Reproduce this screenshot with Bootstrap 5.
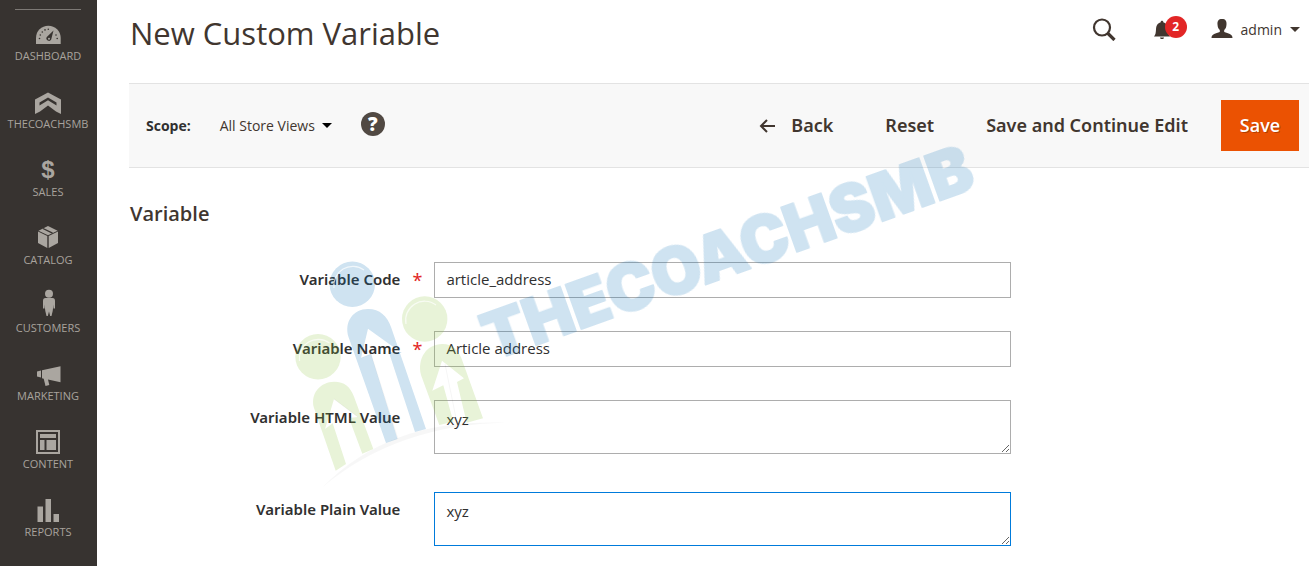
<!DOCTYPE html>
<html lang="en">
<head>
<meta charset="utf-8">
<meta name="viewport" content="width=device-width, initial-scale=1">
<title>New Custom Variable</title>
<link rel="stylesheet" href="https://cdn.jsdelivr.net/npm/bootstrap@5.3.0/dist/css/bootstrap.min.css">
<style>
  body { font-family: "Open Sans", "Noto Sans", sans-serif; font-size: 14px; color: #303030; background: #fff; }
  .side-menu { width: 97px; background: #373330; padding: 9px 1px 6px 0; }
  .side-menu hr { width: 66px; margin: 0 auto 6px; border-top: 1px solid #7d7975; opacity: 1; }
  .side-menu a { color: #a8a39d; font-size: 11px; line-height: 16px; margin-bottom: 20px; text-decoration: none; text-transform: uppercase; }
  .side-menu a:hover { color: #fff; }
  .side-menu svg { width: 28px; height: 30px; margin-bottom: 2px; fill: #aaa6a0; overflow: visible; }
  .main-area { min-width: 0; padding: 0 2px 0 32px; }
  .page-top { height: 83px; padding: 0 9px 0 1px; }
  .page-top h1 { font-size: 31px; line-height: 40px; font-weight: 400; color: #41362f; margin: 13px 0 0; }
  .top-tools { margin-top: 12px; height: 34px; }
  .plain-btn { background: none; border: 0; padding: 0; color: #41362f; }
  .search-btn { margin-right: 37px; }
  .caret { width: 0; height: 0; border: 5px solid transparent; border-top-color: currentColor; border-bottom: 0; }
  .bell-btn { width: 34px; height: 34px; }
  .bell-btn svg { margin-top: 2px; }
  .bell-count { top: 4px; left: 12px; width: 22px; height: 22px; background: #e22626; color: #fff; font-size: 12px; font-weight: 700; line-height: 22px; }
  .action-bar { background: #f8f8f8; border-top: 1px solid #e3e3e3; border-bottom: 1px solid #e3e3e3; padding: 16px 10px 16px 17px; min-height: 85px; }
  .scope-box { gap: 29px; }
  .scope-btn { font-size: 14px; gap: 7px; }
  .help-btn { width: 24px; height: 24px; margin-bottom: 4px; border: 0; padding: 0; background: #514943; color: #fff; font-size: 19px; font-weight: 800; line-height: 24px; }
  .actions .plain-btn { font-family: "Noto Sans", "Open Sans", sans-serif; font-size: 18px; font-weight: 600; margin-right: 52px; }
  .actions .continue-btn { margin-right: 33px; }
  .back-btn { gap: 16px; }
  .save-btn { background: #eb5202; border: 0; border-radius: 0; color: #fff; font-size: 18px; font-weight: 600; width: 78px; height: 51px; padding: 0; text-shadow: 1px 1px 0 rgba(0,0,0,.25); }
  .save-btn:hover { background: #ba4000; color: #fff; }
  h2 { font-size: 20px; line-height: 28px; font-weight: 600; color: #41362f; margin: 32px 0 34px; padding-left: 1px; }
  .field { gap: 34px; margin-bottom: 33px; }
  .field-long { margin-bottom: 38px; }
  .field label { width: 23%; font-family: "Noto Sans", "Open Sans", sans-serif; font-size: 15px; line-height: 35px; font-weight: 600; text-align: right; position: relative; }
  .required::after { content: "*"; color: #e22626; position: absolute; left: calc(100% + 12px); font-size: 18px; font-weight: 400; top: 1px; }
  .field .form-control { width: 48.9%; height: 36px; border: 1px solid #adadad; border-radius: 0; padding: 0 11px 2px; font-size: 15px; line-height: 20px; color: #303030; background: #fff; }
  .field textarea.form-control { height: 54px; padding-top: 8px; }
  .field .form-control.current { border-color: #007bdb; }
  .watermark { left: 193px; top: 140px; width: 700px; height: 350px; pointer-events: none; }
  .watermark text { font: 900 64px "Inter", sans-serif; stroke-width: 2px; stroke-linejoin: round; }
</style>
</head>
<body>
<div class="d-flex align-items-start">
  <nav class="side-menu flex-shrink-0" aria-label="Main">
    <hr>
    <a href="#" class="d-flex flex-column align-items-center">
      <svg viewBox="0 0 28 30" aria-hidden="true"><path d="M2 28v-6C2 15 7.500 9.800 14.300 9.800S26.700 15 26.700 22v6z"/><g fill="#373330"><circle cx="5.500" cy="22.500" r=".8"/><circle cx="6.300" cy="19" r=".8"/><circle cx="8.300" cy="16" r=".8"/><circle cx="11" cy="13.900" r=".8"/><circle cx="14.300" cy="13.200" r=".8"/><circle cx="22" cy="19" r=".8"/><circle cx="23.200" cy="22.500" r=".8"/><path d="M19.500 14.500l-2.300 9a2.500 2.500 0 1 1-4.400-2.600z"/></g><circle cx="15" cy="22.700" r="1" /></svg>
      Dashboard</a>
    <a href="#" class="d-flex flex-column align-items-center">
      <svg viewBox="0 0 28 30" aria-hidden="true"><path d="M1 15.500L14 8.500l13 7V30l-5-2.500-8-6-8 6L1 30z"/><path d="M5.500 18.500L14 13.500l8.500 5v3L14 16.300l-8.500 5.200z" fill="#373330"/></svg>
      TheCoachSMB</a>
    <a href="#" class="d-flex flex-column align-items-center">
      <svg viewBox="0 0 28 30" aria-hidden="true"><text x="14" y="26" text-anchor="middle" font-family="Liberation Sans, sans-serif" font-size="24" font-weight="700">$</text></svg>
      Sales</a>
    <a href="#" class="d-flex flex-column align-items-center">
      <svg viewBox="0 0 28 30" aria-hidden="true"><path d="M4 11.500l9.300 4.500v12L4 23zM24 11.500L14.700 16v12L24 23zM14 6l9.600 4.700L14 15.200l-9.500-4.500z"/><path d="M9 8.500l9.500 4.700" stroke="#373330" stroke-width="1.300"/></svg>
      Catalog</a>
    <a href="#" class="d-flex flex-column align-items-center">
      <svg viewBox="0 0 28 30" aria-hidden="true"><circle cx="15" cy="5.700" r="4"/><path d="M11.500 10h7c1.800 0 2.500 1 2.500 3v7.500h-1.500v-4L18.700 23l-1.200 5h-1.300L15 23.500 13.800 28h-1.300l-1.200-5-.8-6.500v4H9V13c0-2 .7-3 2.500-3z"/></svg>
      Customers</a>
    <a href="#" class="d-flex flex-column align-items-center">
      <svg viewBox="0 0 28 30" aria-hidden="true"><path d="M8 14.300l18.500-4v16L14 23.600l1.300 5.300-3.800 1L9.700 22.700 8 22.300zM3 15.400l4-.8v7l-4-1z"/></svg>
      Marketing</a>
    <a href="#" class="d-flex flex-column align-items-center">
      <svg viewBox="0 0 28 30" aria-hidden="true"><path fill-rule="evenodd" d="M2 6h24v24H2zM4 8v20h20V8z"/><path d="M6 10h16v4H6zM6 16h4.500v10H6zM12.500 16H22v10h-9.500z"/></svg>
      Content</a>
    <a href="#" class="d-flex flex-column align-items-center">
      <svg viewBox="0 0 28 30" aria-hidden="true"><path d="M3.500 14.500H9V30H3.500zM11.500 7H17v23h-5.500zM19.500 22H25v8h-5.500z"/></svg>
      Reports</a>
  </nav>

  <main class="main-area flex-grow-1 position-relative">
    <header class="page-top d-flex justify-content-between align-items-start">
      <h1>New Custom Variable</h1>
      <div class="top-tools d-flex align-items-center">
        <button class="plain-btn search-btn d-flex" aria-label="Search"><svg width="24" height="24" viewBox="0 0 24 24" fill="none" stroke="#41362f"><circle cx="10" cy="10.500" r="8" stroke-width="2.200"/><path d="M15.500 16l7 7" stroke-width="3.200"/></svg></button>
        <button class="plain-btn bell-btn position-relative" aria-label="Notifications"><svg class="d-block" width="18" height="20" viewBox="0 0 18 20" fill="#41362f"><path d="M1 16.500c1.700-2 1.800-4 2-7C3.200 5 5 3 7.500 2.500 7.700 0 10.300 0 10.500 2.500 13 3 14.800 5 15 9.500c.2 3 .3 5 2 7zM7 17.500h4c0 2-4 2-4 0z"/></svg><span class="bell-count position-absolute rounded-circle text-center">2</span></button>
        <button class="plain-btn d-flex align-items-center ms-4"><svg class="me-2" width="22" height="20" viewBox="0 0 22 20" fill="#41362f"><path d="M11 0c3.500 0 4.800 2 4.500 5.500-.2 2.800-1 4.500-2.300 5.500v2c4 1.500 8.300 1.800 8.300 6H.5c0-4.200 4.300-4.500 8.300-6v-2C7.500 10 6.700 8.300 6.500 5.500 6.200 2 7.500 0 11 0z"/></svg>admin<span class="caret ms-2"></span></button>
      </div>
    </header>

    <section class="action-bar d-flex justify-content-between align-items-center">
      <div class="scope-box d-flex align-items-center">
        <strong>Scope:</strong>
        <button class="plain-btn scope-btn d-flex align-items-center">All Store Views<span class="caret text-black"></span></button>
        <button class="help-btn rounded-circle text-center" type="button" title="Scope help">?</button>
      </div>
      <div class="actions d-flex align-items-center">
        <button class="plain-btn back-btn d-flex align-items-center"><svg width="16" height="14" viewBox="0 0 16 14" fill="none" stroke="#41362f" stroke-width="2"><path d="M8 1L2 7l6 6M2 7h14"/></svg>Back</button>
        <button class="plain-btn">Reset</button>
        <button class="plain-btn continue-btn">Save and Continue Edit</button>
        <button class="btn save-btn">Save</button>
      </div>
    </section>

    <form>
      <h2>Variable</h2>
      <div class="field d-flex"><label class="required" for="code">Variable Code</label><input class="form-control" id="code" type="text" value="article_address"></div>
      <div class="field d-flex"><label class="required" for="name">Variable Name</label><input class="form-control" id="name" type="text" value="Article address"></div>
      <div class="field field-long d-flex"><label for="html">Variable HTML Value</label><textarea class="form-control" id="html">xyz</textarea></div>
      <div class="field d-flex mb-0"><label for="plain">Variable Plain Value</label><textarea class="form-control current" id="plain">xyz</textarea></div>
    </form>

    <!-- brand watermark laid over the form -->
    <svg class="watermark position-absolute" viewBox="290 140 700 350" aria-hidden="true">
      <g opacity=".2" fill="#0f73b9">
        <circle cx="352.300" cy="284.300" r="22.700"/>
        <path d="M386 443L348.500 337C344 322 353 309 368 309c12 0 19 7 23 18l35 102-11 3-26.300-80.300 13 1.300L368 328.700 361 358l10-4 26.500 85z"/>
        <text transform="translate(492 361) rotate(-19.700)" stroke="#0f73b9">THECOACHSMB</text>
      </g>
      <g opacity=".2" fill="#8cc33c">
        <circle cx="424.700" cy="319" r="22.700"/>
        <circle cx="318" cy="356.700" r="22.700"/>
        <path d="M439.300 425L421 375c-4-17 6-31 21.300-31 11 0 17 7 20.400 17.700L483 418.300l-16.300 4.400L457 382l7-3.700-22-17.600-9.700 30 11-5.400 10 36.400z"/>
        <path d="M335.700 470.700L314 408c-4-14 6-26.300 20.300-26.300 10 0 16 5 19.700 15l19.300 52.300-11 4.700L349 418l9-1-24-18-9 30 7.700-5.700L346 464z"/>
      </g>
      <g fill="none" stroke="#fff" stroke-width="1.200" opacity=".7">
        <path d="M334 288a19 19 0 0 1 30-18M406 324a19 19 0 0 1 30-19M299.500 361a19 19 0 0 1 30-18"/>
      </g>
      <g fill="none" stroke="#000" stroke-width="1" opacity=".04">
        <path d="M361 358l10-4 27 85M334 399l24 18M445 364l11 54"/>
      </g>
      <path d="M321.700 488C372 437 432 420 506 422.700 436 424 373 444 321.700 488z" opacity=".03"/>
    </svg>
  </main>
</div>
<script src="https://cdn.jsdelivr.net/npm/bootstrap@5.3.0/dist/js/bootstrap.bundle.min.js"></script>
</body>
</html>
